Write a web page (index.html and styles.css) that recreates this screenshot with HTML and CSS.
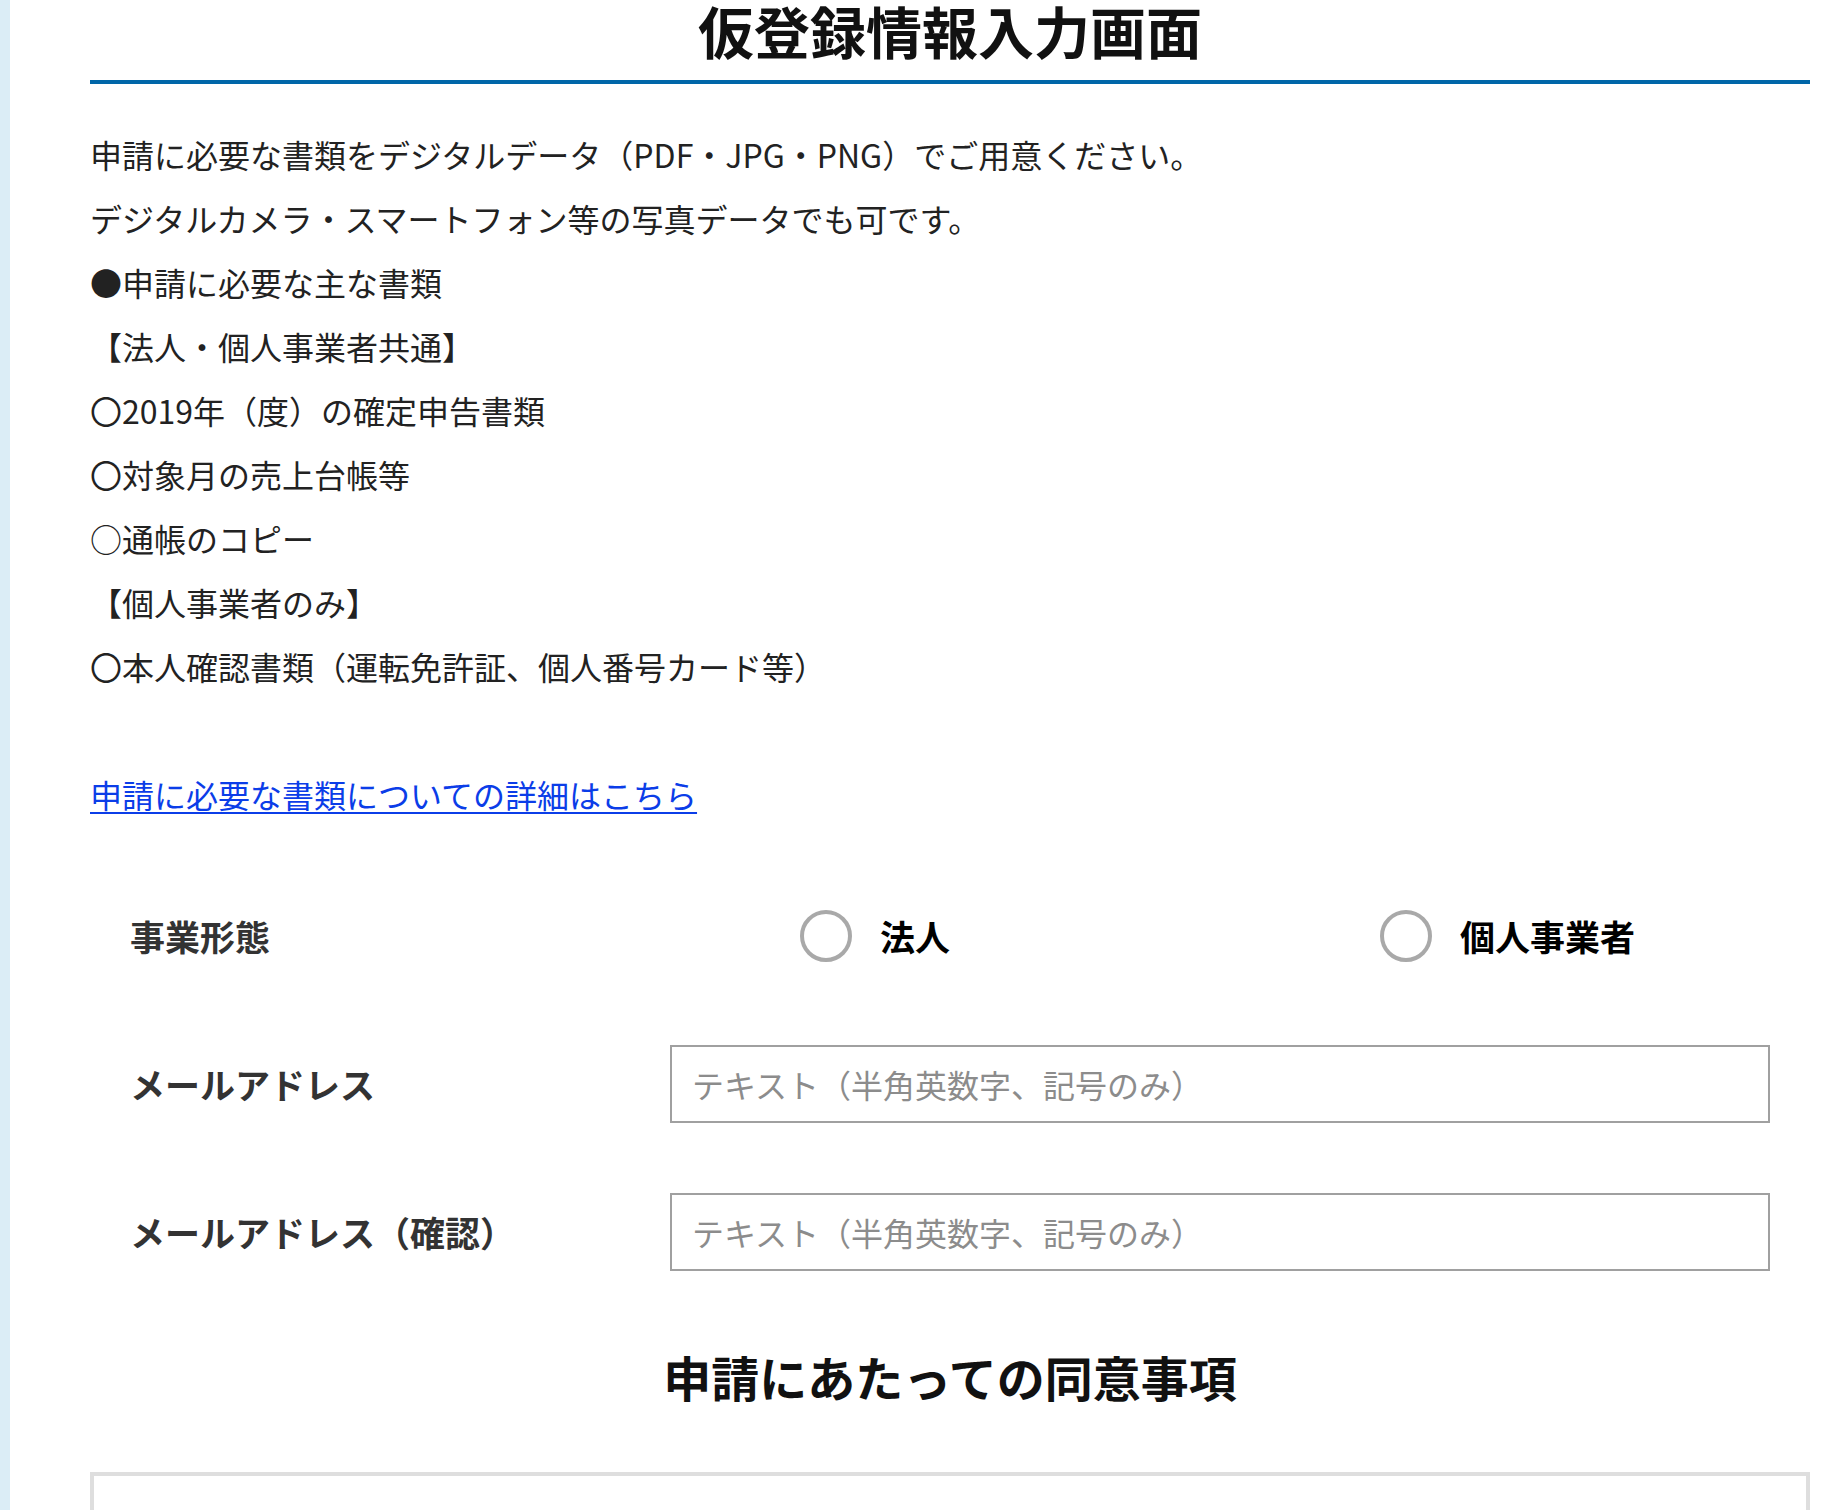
FILE: index.html
```html
<!DOCTYPE html>
<html lang="ja">
<head>
<meta charset="utf-8">
<title>仮登録情報入力画面</title>
<link rel="stylesheet" href="styles.css">
</head>
<body>
<main class="page">
  <h1 class="page-title">仮登録情報入力画面</h1>

  <section class="intro">
    <p>申請に必要な書類をデジタルデータ（PDF・JPG・PNG）でご用意ください。</p>
    <p>デジタルカメラ・スマートフォン等の写真データでも可です。</p>
    <p>●申請に必要な主な書類</p>
    <p>【法人・個人事業者共通】</p>
    <p>〇2019年（度）の確定申告書類</p>
    <p>〇対象月の売上台帳等</p>
    <p>○通帳のコピー</p>
    <p>【個人事業者のみ】</p>
    <p>〇本人確認書類（運転免許証、個人番号カード等）</p>
  </section>

  <p class="detail-link"><a href="#">申請に必要な書類についての詳細はこちら</a></p>

  <form class="form">
    <div class="form-row">
      <div class="form-label">事業形態</div>
      <div class="radio-group">
        <label class="radio-option"><input type="radio" name="type" class="radio-input"><span class="radio-text">法人</span></label>
        <label class="radio-option"><input type="radio" name="type" class="radio-input"><span class="radio-text">個人事業者</span></label>
      </div>
    </div>
    <div class="form-row">
      <div class="form-label">メールアドレス</div>
      <input class="text-input" type="text" placeholder="テキスト（半角英数字、記号のみ）">
    </div>
    <div class="form-row">
      <div class="form-label">メールアドレス（確認）</div>
      <input class="text-input" type="text" placeholder="テキスト（半角英数字、記号のみ）">
    </div>
  </form>

  <h2 class="section-title">申請にあたっての同意事項</h2>
  <div class="agree-box"></div>
</main>
</body>
</html>
```
FILE: styles.css
```css
* {
  box-sizing: border-box;
}

html, body {
  margin: 0;
  padding: 0;
}

body {
  background: #ffffff;
  border-left: 10px solid #dbedf6;
  min-height: 100vh;
  font-family: "Noto Sans CJK JP", "Noto Sans", sans-serif;
  color: #222222;
}

.page {
  padding: 0 30px 0 80px;
}

.page-title {
  margin: 0;
  padding: 0 0 20px;
  font-size: 56px;
  line-height: 60px;
  font-weight: 700;
  text-align: center;
  color: #111111;
  border-bottom: 4px solid #0066a8;
}

.intro {
  padding-top: 38px;
}

.intro p {
  margin: 0;
  font-size: 32px;
  line-height: 64px;
}

.detail-link {
  margin: 64px 0 0;
  font-size: 32px;
  line-height: 64px;
}

.detail-link a {
  color: #0b3de8;
  text-decoration: underline;
  text-underline-offset: 4px;
  text-decoration-thickness: 2px;
}

.form {
  margin-top: 36px;
  padding: 0 40px;
}

.form-row {
  display: grid;
  grid-template-columns: 540px 1fr;
  align-items: center;
  height: 148px;
}

.form-label {
  font-size: 35px;
  font-weight: 700;
  color: #333333;
  line-height: 1.3;
}

.radio-group {
  display: grid;
  grid-template-columns: 580px auto;
  padding-left: 130px;
  align-items: center;
}

.radio-option {
  display: flex;
  align-items: center;
  gap: 28px;
}

.radio-input {
  appearance: none;
  -webkit-appearance: none;
  margin: 0;
  width: 52px;
  height: 52px;
  border: 4px solid #a9a9a9;
  border-radius: 50%;
  background: #ffffff;
}

.radio-text {
  font-size: 35px;
  font-weight: 700;
  color: #000000;
  line-height: 1.3;
}

.text-input {
  width: 100%;
  height: 78px;
  border: 2px solid #a0a0a0;
  border-radius: 0;
  padding: 0 20px;
  font-family: "Noto Sans CJK JP", "Noto Sans", sans-serif;
  font-size: 32px;
  color: #222222;
  background: #ffffff;
  outline: none;
}

.text-input::placeholder {
  color: #8c8c8c;
}

.section-title {
  margin: 34px 0 60px;
  font-size: 48px;
  line-height: 72px;
  font-weight: 700;
  text-align: center;
  color: #111111;
}

.agree-box {
  height: 300px;
  border: 4px solid #dedede;
  background: #ffffff;
}
```
